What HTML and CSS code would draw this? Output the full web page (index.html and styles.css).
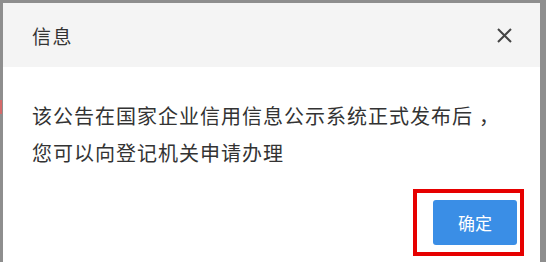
FILE: index.html
```html
<!DOCTYPE html>
<html lang="zh-CN">
<head>
<meta charset="utf-8">
<link rel="stylesheet" href="styles.css">
</head>
<body>
<div class="backdrop-mark"></div>
<div class="dialog">
  <div class="dialog-header">
    <span class="dialog-title">信息</span>
    <svg class="close" width="17" height="17" viewBox="0 0 17 17"><path d="M2 2 L15 15 M15 2 L2 15" stroke="#444" stroke-width="2" fill="none"/></svg>
  </div>
  <div class="dialog-body">
    <p>该公告在国家企业信用信息公示系统正式发布后<span class="comma">，</span></p>
    <p>您可以向登记机关申请办理</p>
  </div>
  <div class="dialog-footer">
    <button class="btn-primary">确定</button>
  </div>
</div>
</body>
</html>
```
FILE: styles.css
```css
html, body {
  margin: 0;
  height: 100%;
  overflow: hidden;
}
body {
  background: #8e8e8e;
  padding: 3px 0 0 3px;
  box-sizing: border-box;
  font-family: "Noto Sans CJK SC", "Noto Sans", sans-serif;
  position: relative;
}
.backdrop-mark {
  position: absolute;
  left: 0;
  top: 100px;
  width: 2px;
  height: 14px;
  background: #d46a6a;
}
.dialog {
  width: 537px;
  height: 100%;
  background: #fff;
  display: flex;
  flex-direction: column;
}
.dialog-header {
  height: 64px;
  background: #f4f4f4;
  display: flex;
  align-items: center;
  justify-content: space-between;
  padding: 0 27px 0 29px;
  flex-shrink: 0;
}
.dialog-title {
  font-size: 19px;
  color: #333;
  letter-spacing: 1.5px;
}
.close {
  display: block;
}
.dialog-body {
  padding: 30px 29px 0 29px;
}
.dialog-body p {
  margin: 0;
  font-size: 20px;
  line-height: 37px;
  letter-spacing: 1px;
  color: #333;
  white-space: nowrap;
}
.comma {
  margin-left: 6px;
}
.dialog-footer {
  display: flex;
  justify-content: flex-end;
  padding: 29px 23px 0 0;
}
.btn-primary {
  position: relative;
  width: 84px;
  height: 45px;
  border: none;
  border-radius: 3px;
  background: #3a8ee6;
  color: #fff;
  font-family: inherit;
  font-size: 17px;
  padding: 0;
}
.btn-primary::after {
  content: "";
  position: absolute;
  top: -11px;
  left: -20px;
  right: -7px;
  bottom: -11px;
  border: 4px solid #e60000;
}
```
